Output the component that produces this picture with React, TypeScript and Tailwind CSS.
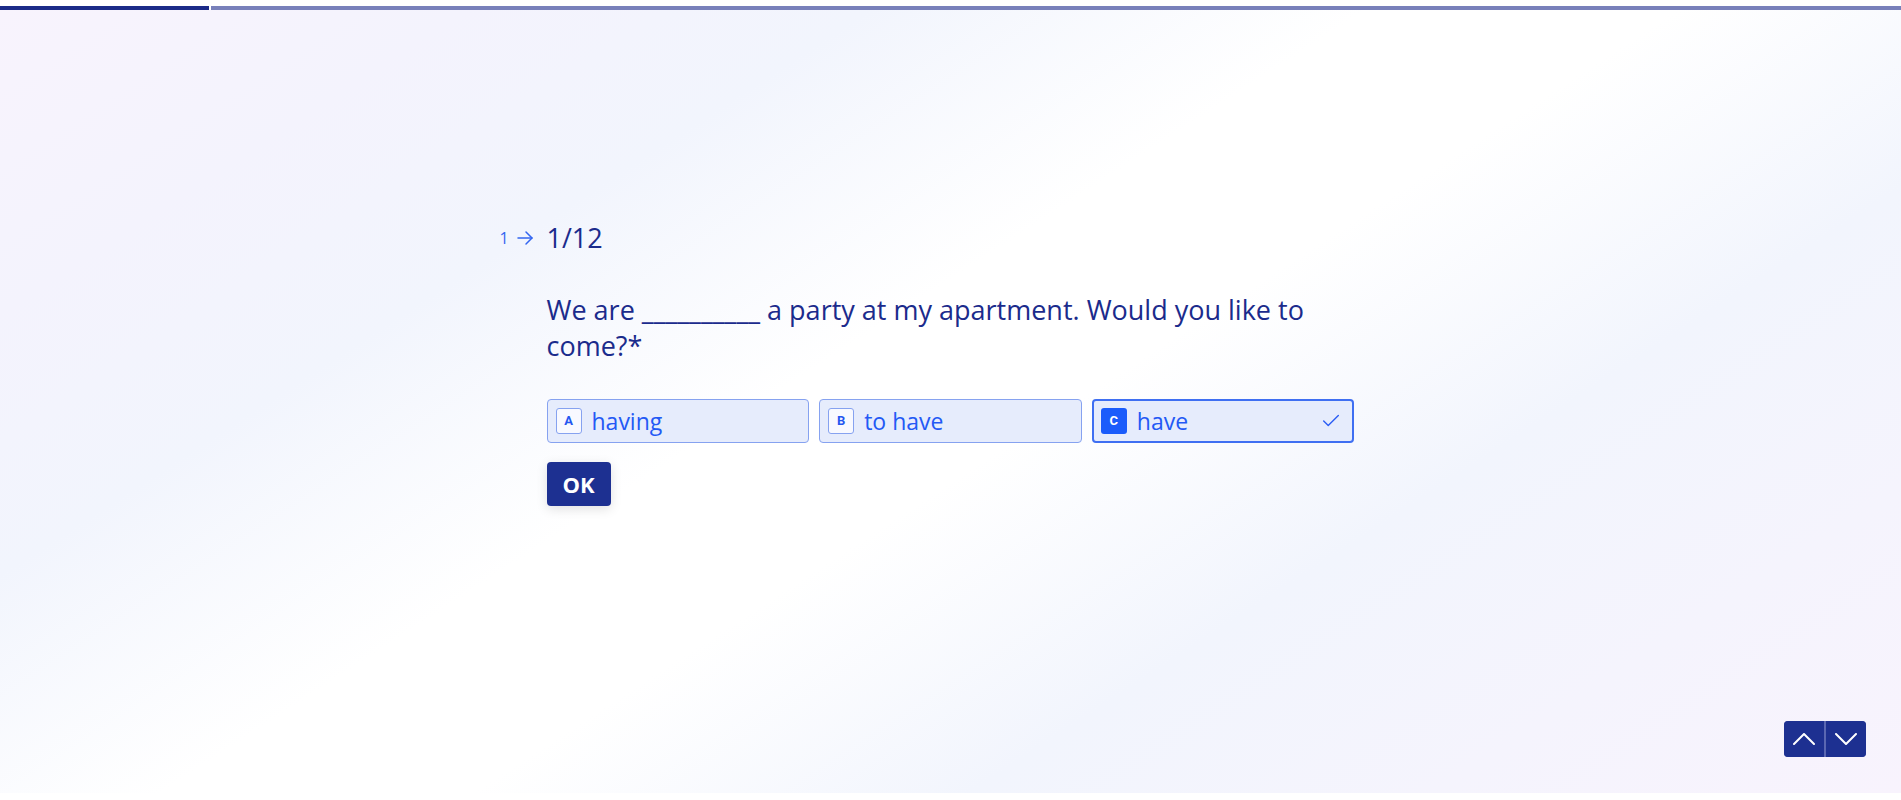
import { Check } from "lucide-react";

const options = [
  { key: "A", label: "having", selected: false },
  { key: "B", label: "to have", selected: false },
  { key: "C", label: "have", selected: true },
];

function ArrowIcon() {
  return (
    <svg width="24" height="24" viewBox="0 0 24 24" fill="none" stroke="currentColor" strokeWidth="1.5" strokeLinecap="round" strokeLinejoin="round">
      <path d="M5 12h14" />
      <path d="m13 6 6 6-6 6" />
    </svg>
  );
}

function Chevron({ up }: { up?: boolean }) {
  return (
    <svg width="22" height="12" viewBox="0 0 22 12" fill="none" stroke="white" strokeWidth="2" strokeLinecap="round" strokeLinejoin="round">
      {up ? <polyline points="1,11 11,1 21,11" /> : <polyline points="1,1 11,11 21,1" />}
    </svg>
  );
}

export default function App() {
  return (
    <div className="h-[800px] w-full bg-white flex flex-col font-['Open_Sans',sans-serif] overflow-hidden">
      {/* progress */}
      <div className="pt-[6px] bg-white">
        <div className="flex h-[4px] gap-[2px]">
          <div className="w-[209px] bg-[#1c2b88]" />
          <div className="flex-1 bg-[#7880ba]" />
        </div>
      </div>

      <main className="relative h-[783px] bg-[linear-gradient(147deg,#f8f3fd_0%,#f4f3fd_15%,#f2f5fd_28%,#ffffff_44%,#ffffff_54%,#f2f5fd_70%,#f8f3fd_100%)]">
        <div className="w-[808px] mx-auto pt-[210px]">
          <div className="flex items-center -ml-[47px] h-[36px]">
            <div className="flex items-center gap-[4px] mr-[10px] text-[#3366f0]">
              <span className="text-[16px] leading-none w-[9px]">1</span>
              <ArrowIcon />
            </div>
            <span className="text-[27px] leading-[36px] text-[#1b2b8c]">1/12</span>
          </div>

          <p className="mt-[36px] text-[27px] leading-[36px] text-[#1b2b8c]">
            We are __________ a party at my apartment. Would you like to come?*
          </p>

          <div className="mt-[35px] grid grid-cols-3 gap-[10px]">
            {options.map((o) => (
              <div
                key={o.key}
                className={
                  o.selected
                    ? "h-[44px] rounded-[4px] border-2 border-[#3f6ff2] bg-[#e6ecfc] flex items-center pl-[7px] pr-[10px] text-[#2359f5]"
                    : "h-[44px] rounded-[4px] border border-[#86a2f0] bg-[#e6ecfc] flex items-center pl-[8px] pr-[11px] text-[#2359f5]"
                }
              >
                <span
                  className={
                    o.selected
                      ? "w-[26px] h-[26px] rounded-[3px] bg-[#1b5cfb] text-white text-[13px] font-bold flex items-center justify-center font-['Roboto',sans-serif]"
                      : "w-[26px] h-[26px] rounded-[3px] border border-[#86a2f0] bg-[#f8f9ff] text-[#2456f0] text-[13px] font-bold flex items-center justify-center font-['Roboto',sans-serif]"
                  }
                >
                  {o.key}
                </span>
                <span className="ml-[10px] text-[23px] leading-none flex-1">{o.label}</span>
                {o.selected && <Check size={22} strokeWidth={1.5} className="text-[#2a5cf4]" />}
              </div>
            ))}
          </div>

          <button className="mt-[19px] h-[44px] w-[64px] rounded-[4px] bg-[#1d3091] text-white text-[22px] font-bold shadow-[0_3px_12px_rgba(0,0,0,0.12)] flex items-center justify-center">
            OK
          </button>
        </div>

        <div className="absolute right-[35px] bottom-[36px] flex gap-[2px] bg-[#5a67b2] rounded-[4px] overflow-hidden">
          <button className="w-[40px] h-[36px] bg-[#1d3091] flex items-center justify-center">
            <Chevron up />
          </button>
          <button className="w-[40px] h-[36px] bg-[#1d3091] flex items-center justify-center">
            <Chevron />
          </button>
        </div>
      </main>
    </div>
  );
}
